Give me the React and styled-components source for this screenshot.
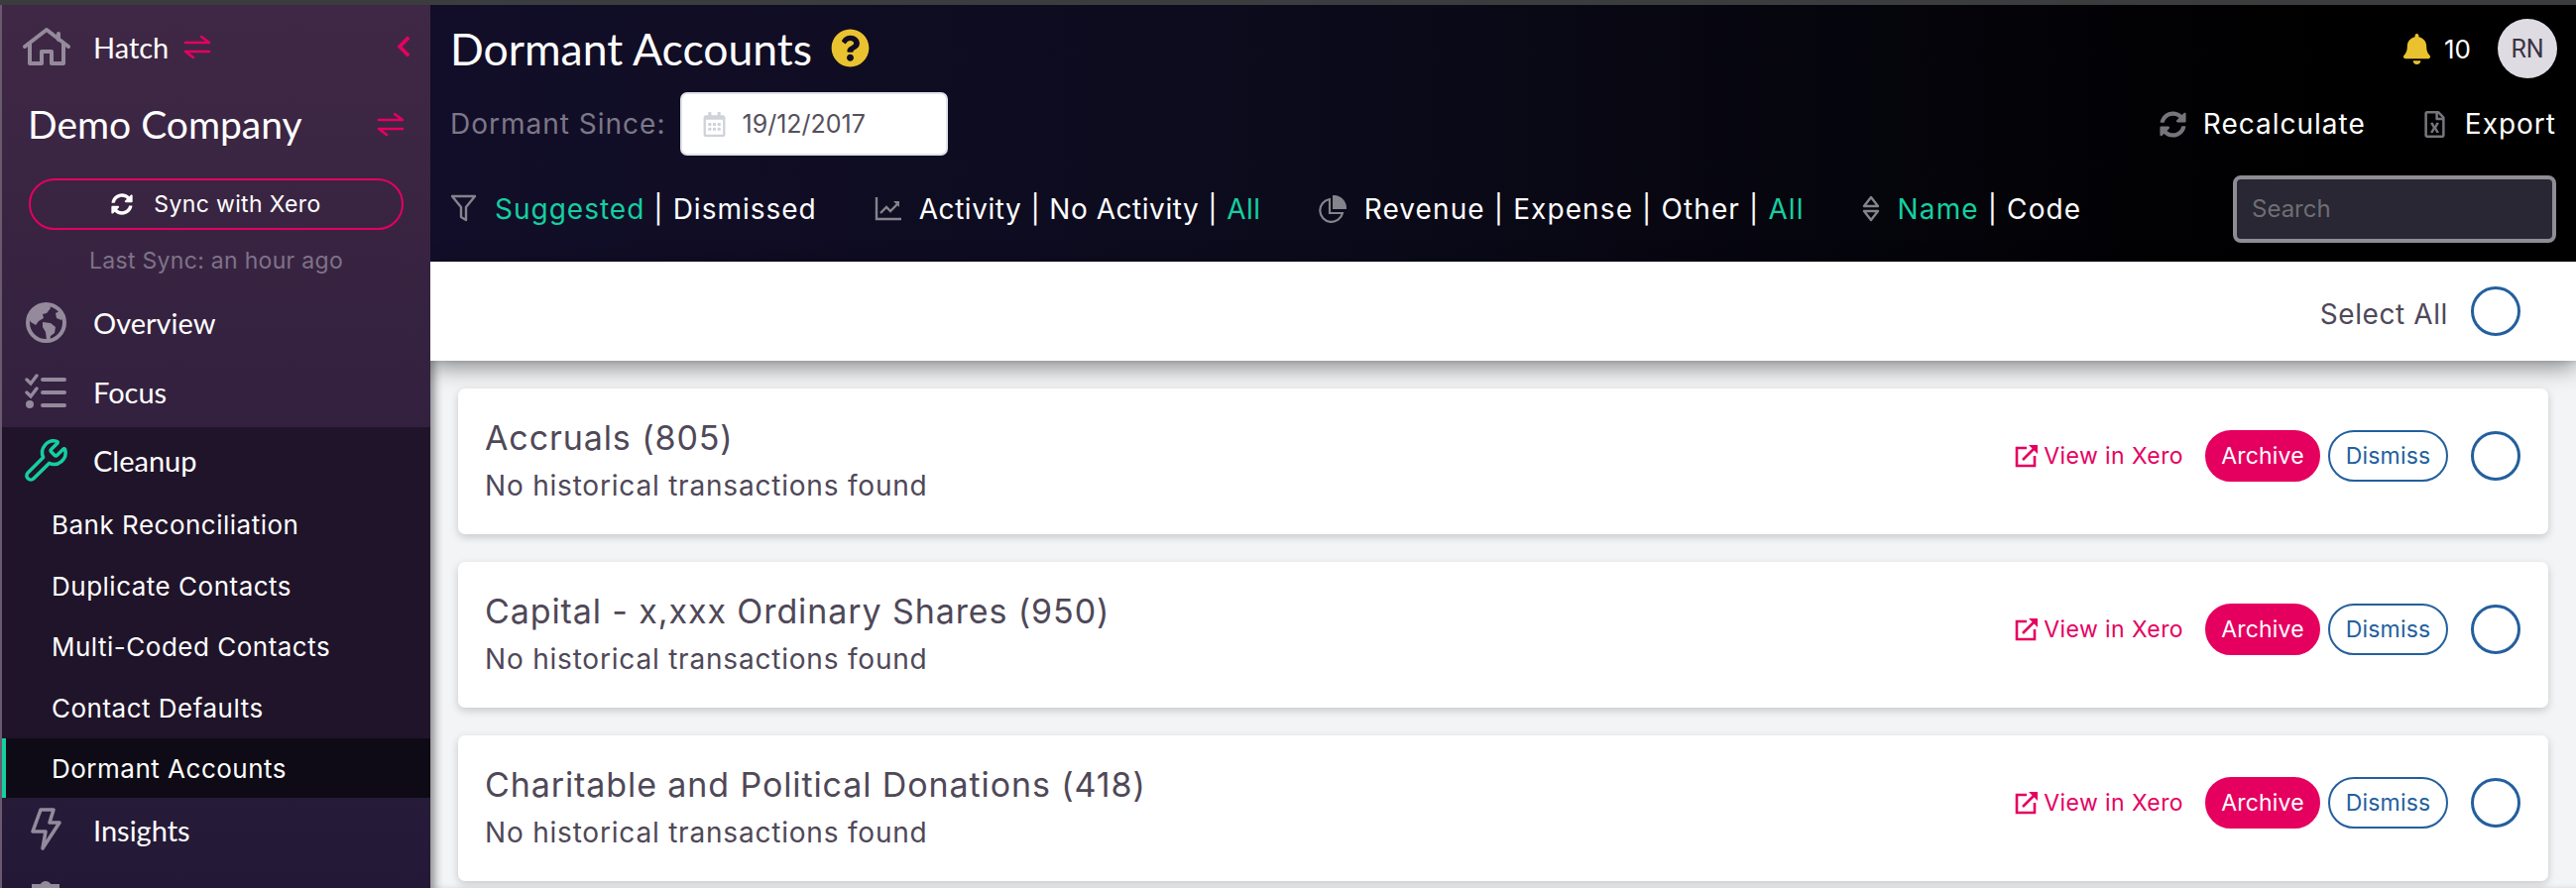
import React from 'react';
import styled, { createGlobalStyle } from 'styled-components';
import { FaSyncAlt, FaChevronLeft, FaQuestionCircle, FaBell, FaRegFileExcel, FaRegCalendarAlt } from 'react-icons/fa';
import { Wrench } from 'lucide-react';

const GlobalStyle = createGlobalStyle`
  html, body {
    margin: 0;
    padding: 0;
    width: 2598px;
    height: 896px;
    overflow: hidden;
    background: #f3f4f6;
    font-family: Inter, "Noto Sans", sans-serif;
  }
  * { box-sizing: border-box; }
`;

const quick = `Lato, "Noto Sans", sans-serif`;

const Page = styled.div`
  width: 2598px;
  height: 896px;
  display: flex;
  flex-direction: column;
  overflow: hidden;
`;
const TopStrip = styled.div`
  height: 5px;
  flex: none;
  background: #3b3c3e;
`;
const Body = styled.div`
  flex: 1;
  display: flex;
  min-height: 0;
`;

const Sidebar = styled.aside`
  width: 434px;
  flex: none;
  border-left: 2px solid #6a5a70;
  background: linear-gradient(180deg, #3f2845 0%, #33213f 45%, #231936 100%);
  color: #fff;
  z-index: 3;
  overflow: hidden;
`;
const BrandRow = styled.div`
  height: 86px;
  display: flex;
  align-items: center;
  padding: 0 15px 2px 21px;
  font-family: ${quick};
  font-size: 29px;
  svg.home { margin-right: 23px; }
  svg.swap { margin-left: 15px; }
  svg.back { margin-left: auto; color: #e5005f; }
`;
const CompanyRow = styled.div`
  height: 70px;
  display: flex;
  align-items: center;
  justify-content: space-between;
  padding: 0 26px 2px;
  font-family: ${quick};
  font-size: 39px;
`;
const SyncButton = styled.button`
  display: flex;
  align-items: center;
  justify-content: center;
  gap: 21px;
  width: 378px;
  height: 52px;
  margin: 19px 0 0 27px;
  background: transparent;
  border: 2px solid #e5005f;
  border-radius: 26px;
  color: #fff;
  font: 400 23px Inter, sans-serif;
  letter-spacing: 0.35px;
`;
const LastSync = styled.div`
  margin: 14px 0 11px;
  height: 34px;
  line-height: 34px;
  text-align: center;
  color: #7f7289;
  font-size: 23px;
  letter-spacing: 0.3px;
`;
const NavItem = styled.div`
  height: ${p => p.$h || 70}px;
  display: flex;
  align-items: center;
  padding-bottom: 2px;
  font-family: ${quick};
  font-size: 29px;
  color: #fff;
  background: ${p => (p.$open ? '#20142a' : 'transparent')};
`;
const NavIcon = styled.span`
  width: 92px;
  flex: none;
  display: flex;
  justify-content: center;
  padding-right: 4px;
  color: ${p => (p.$on ? '#15cfa0' : '#948a9c')};
`;
const SubList = styled.div`
  background: #20142a;
`;
const SubItem = styled.div`
  height: ${p => (p.$active ? '60px' : '61.5px')};
  display: flex;
  align-items: center;
  padding-left: ${p => (p.$active ? '46px' : '50px')};
  font-size: 26px;
  letter-spacing: 0.5px;
  color: #fff;
  background: ${p => (p.$active ? '#0e0b16' : 'transparent')};
  border-left: ${p => (p.$active ? '4px solid #15cfa0' : 'none')};
`;

const Main = styled.main`
  flex: 1;
  min-width: 0;
  display: flex;
  flex-direction: column;
`;
const Header = styled.header`
  height: 259px;
  flex: none;
  padding: 0 20px;
  background: linear-gradient(90deg, #120e29 0%, #0c0b1c 40%, #000 88%);
  color: #fff;
  display: flex;
  flex-direction: column;
`;
const TitleRow = styled.div`
  height: 88px;
  flex: none;
  display: flex;
  align-items: center;
  justify-content: space-between;
`;
const Title = styled.h1`
  margin: 0 0 2px;
  display: flex;
  align-items: center;
  gap: 19px;
  font: 400 44.5px ${quick};
  color: #fff;
`;
const UserBox = styled.div`
  display: flex;
  align-items: center;
  font-size: 26px;
  margin: 0 -1px 0 0;
  span { margin: 0 27px 0 12px; }
`;
const Avatar = styled.div`
  width: 60px;
  height: 60px;
  border-radius: 50%;
  background: #dedce2;
  color: #3a3444;
  display: flex;
  align-items: center;
  justify-content: center;
  font: 400 25px Roboto, sans-serif;
`;
const DateRow = styled.div`
  height: 64px;
  flex: none;
  display: flex;
  align-items: center;
  font-size: 28px;
  letter-spacing: 1px;
  color: #7d7787;
`;
const DateBox = styled.div`
  width: 270px;
  height: 64px;
  margin-left: 15px;
  border-radius: 7px;
  border: 2px solid #dfe3ea;
  background: #fff;
  display: flex;
  align-items: center;
  gap: 15px;
  padding-left: 20px;
  font-size: 25px;
  letter-spacing: 0;
  color: #55505c;
  svg { color: #cfd2d9; }
`;
const Actions = styled.div`
  margin-left: auto;
  display: flex;
  align-items: center;
  color: #fff;
  font-size: 28px;
  letter-spacing: 1px;
`;
const Action = styled.div`
  display: flex;
  align-items: center;
  gap: 17px;
  margin-left: 56px;
  svg { color: #77757b; }
`;
const FilterRow = styled.div`
  flex: 1;
  display: flex;
  align-items: center;
  font-size: 28px;
`;
const FilterGroup = styled.div`
  display: flex;
  align-items: center;
  margin-right: 58px;
  letter-spacing: ${p => p.$track || 1.1}px;
  svg { margin-right: 18px; flex: none; }
`;
const Opt = styled.span`
  color: ${p => (p.$on ? '#15cfa0' : '#fff')};
`;
const Sep = styled.span`
  margin: 0 9px;
  color: #fff;
`;
const Search = styled.div`
  width: 326px;
  height: 68px;
  margin: 0 0 0 auto;
  border: 4px solid #8f8d94;
  border-radius: 8px;
  background: #282733;
  color: #6f6d75;
  font-size: 24px;
  display: flex;
  align-items: center;
  padding-left: 15px;
`;

const SelectBar = styled.div`
  height: 100px;
  flex: none;
  background: #fff;
  display: flex;
  align-items: center;
  justify-content: flex-end;
  padding-right: 56px;
  gap: 23px;
  font-size: 28px;
  letter-spacing: 0.6px;
  color: #4f4858;
  box-shadow: 0 6px 22px rgba(0, 0, 0, 0.45);
  z-index: 2;
`;
const SelectLabel = styled.span`
  margin-top: 6px;
`;
const Radio = styled.div`
  width: 50px;
  height: 50px;
  flex: none;
  border-radius: 50%;
  border: 3px solid #235f9e;
  background: #fff;
`;
const List = styled.div`
  flex: 1;
  padding: 28px 28px 0;
  display: flex;
  flex-direction: column;
  gap: 28px;
  overflow: hidden;
  box-shadow: inset 9px 0 10px -5px rgba(0, 0, 0, 0.45);
`;
const Card = styled.article`
  height: 147px;
  flex: none;
  display: flex;
  align-items: center;
  justify-content: space-between;
  padding: 0 28px 0 27px;
  background: #fff;
  border-radius: 7px;
  box-shadow: 0 3px 8px rgba(0, 0, 0, 0.18);
`;
const CardText = styled.div`
  padding-bottom: 3px;
`;
const CardName = styled.div`
  font-size: 34px;
  letter-spacing: 0.9px;
  color: #4f4858;
  margin-bottom: 11px;
`;
const CardNote = styled.div`
  font-size: 28px;
  letter-spacing: 0.8px;
  color: #4f4858;
`;
const CardActions = styled.div`
  display: flex;
  align-items: center;
  margin-bottom: 11px;
`;
const XeroLink = styled.a`
  display: flex;
  align-items: center;
  gap: 5px;
  margin-right: 22px;
  color: #e5005f;
  font-size: 23px;
  letter-spacing: 0.4px;
`;
const Pill = styled.button`
  height: 52px;
  width: ${p => (p.$solid ? 116 : 121)}px;
  padding: 0;
  margin-right: 8px;
  border-radius: 26px;
  font: 400 23px Inter, sans-serif;
  letter-spacing: 0.2px;
  color: ${p => (p.$solid ? '#fff' : '#235f9e')};
  background: ${p => (p.$solid ? '#e5005f' : '#fff')};
  border: 2px solid ${p => (p.$solid ? '#e5005f' : '#235f9e')};
`;
const RowRadio = styled(Radio)`
  margin-left: 15px;
`;

const Swap = ({ className }) => (
  <svg className={className} width="28" height="24" viewBox="0 0 28 24" fill="none" stroke="#e5005f" strokeWidth="2.6" strokeLinecap="round" strokeLinejoin="round">
    <path d="M2 8h24M18 2l8 6" />
    <path d="M26 17H2M10 23L2 17" />
  </svg>
);

const HomeIcon = () => (
  <svg className="home" width="48" height="38" viewBox="0 0 48 38" fill="none" stroke="#948a9c" strokeWidth="4" strokeLinejoin="round" strokeLinecap="round">
    <path d="M2 19L24 2l22 17" />
    <path d="M7 16v20h12V24h10v12h12V16" />
    <path d="M36 6v6" />
  </svg>
);

const GlobeIcon = () => (
  <svg width="41" height="41" viewBox="0 0 41 41" fill="#948a9c">
    <circle cx="20.5" cy="20.5" r="18.5" fill="none" stroke="#948a9c" strokeWidth="4" />
    <path d="M13 3l11-1 1 4-4 5-4 1 1 4-5 3-3 4-5-3-3-6 4-7z" />
    <path d="M17 20l8 1 5 4-1 6-4 3-1 5-3-1-1-8-3-5z" />
    <path d="M30 11l4-2 4 6-2 3-5-2z" />
  </svg>
);

const TasksIcon = () => (
  <svg width="42" height="36" viewBox="0 0 42 36" fill="none" stroke="#948a9c" strokeLinecap="round">
    <path d="M2 6l4 4 6-8" strokeWidth="3.4" />
    <path d="M2 19l4 4 6-8" strokeWidth="3.4" />
    <circle cx="5" cy="31" r="4" fill="#948a9c" stroke="none" />
    <path d="M18 6h22M18 19h22M18 32h22" strokeWidth="4" />
  </svg>
);

const BoltIcon = () => (
  <svg width="32" height="44" viewBox="0 0 32 44" fill="none" stroke="#948a9c" strokeWidth="3.6" strokeLinejoin="round">
    <path d="M11 2h13l-4 13h10L13 41l3-17H3z" />
  </svg>
);

// only the top of this one is on screen
const CutOffIcon = () => (
  <svg width="40" height="41" viewBox="0 0 40 41" fill="#948a9c">
    <circle cx="20" cy="12" r="6" />
    <path d="M6 9h28v6H6z" />
    <path d="M10 15h20v26H10z" />
  </svg>
);

const FilterIcon = () => (
  <svg width="27" height="29" viewBox="0 0 27 29" fill="none" stroke="#85838b" strokeWidth="2.4" strokeLinejoin="round">
    <path d="M2 2h23l-9 11v13l-5-3V13z" />
  </svg>
);

const ChartIcon = () => (
  <svg width="27" height="24" viewBox="0 0 27 24" fill="none" stroke="#85838b" strokeWidth="2.4">
    <path d="M2 0v22h25" />
    <path d="M6 16l6-6 4 4 8-8" />
    <path d="M19 4h6v6" fill="#85838b" stroke="none" />
  </svg>
);

const PieIcon = () => (
  <svg width="28" height="28" viewBox="0 0 28 28" fill="none">
    <path d="M11 4a11.5 11.5 0 1 0 13 14H11z" stroke="#85838b" strokeWidth="2.2" />
    <path d="M14 0a13 13 0 0 1 14 14H14z" fill="#85838b" />
  </svg>
);

const SortIcon = () => (
  <svg width="18" height="27" viewBox="0 0 18 27" fill="none" stroke="#85838b" strokeWidth="2.4" strokeLinejoin="round">
    <path d="M2 11l7-9 7 9z" />
    <path d="M2 16l7 9 7-9z" />
  </svg>
);

const ExternalIcon = () => (
  <svg width="24" height="24" viewBox="0 0 24 24" fill="none" stroke="#e5005f" strokeWidth="2.6">
    <path d="M12 4H2v18h18V12" />
    <path d="M8 16L21 3" />
    <path d="M14 1h9v9z" fill="#e5005f" stroke="none" />
  </svg>
);

const accounts = [
  'Accruals (805)',
  'Capital - x,xxx Ordinary Shares (950)',
  'Charitable and Political Donations (418)',
];

const subItems = ['Bank Reconciliation', 'Duplicate Contacts', 'Multi-Coded Contacts', 'Contact Defaults'];

export default function App() {
  return (
    <Page>
      <GlobalStyle />
      <TopStrip />
      <Body>
        <Sidebar>
          <BrandRow>
            <HomeIcon />
            Hatch
            <Swap className="swap" />
            <FaChevronLeft className="back" size={24} />
          </BrandRow>
          <CompanyRow>
            Demo Company
            <Swap />
          </CompanyRow>
          <SyncButton>
            <FaSyncAlt size={22} />
            Sync with Xero
          </SyncButton>
          <LastSync>Last Sync: an hour ago</LastSync>
          <NavItem>
            <NavIcon><GlobeIcon /></NavIcon>
            Overview
          </NavItem>
          <NavItem>
            <NavIcon><TasksIcon /></NavIcon>
            Focus
          </NavItem>
          <NavItem $open $h={68}>
            <NavIcon $on><Wrench size={47} strokeWidth={1.8} /></NavIcon>
            Cleanup
          </NavItem>
          <SubList>
            {subItems.map(s => <SubItem key={s}>{s}</SubItem>)}
            <SubItem $active>Dormant Accounts</SubItem>
          </SubList>
          <NavItem $h={66}>
            <NavIcon><BoltIcon /></NavIcon>
            Insights
          </NavItem>
          <NavItem $h={66}>
            <NavIcon><CutOffIcon /></NavIcon>
          </NavItem>
        </Sidebar>
        <Main>
          <Header>
            <TitleRow>
              <Title>
                Dormant Accounts
                <FaQuestionCircle size={39} color="#eac22f" />
              </Title>
              <UserBox>
                <FaBell size={31} color="#eac22f" />
                <span>10</span>
                <Avatar>RN</Avatar>
              </UserBox>
            </TitleRow>
            <DateRow>
              Dormant Since:
              <DateBox>
                <FaRegCalendarAlt size={25} />
                19/12/2017
              </DateBox>
              <Actions>
                <Action><FaSyncAlt size={27} />Recalculate</Action>
                <Action><FaRegFileExcel size={27} />Export</Action>
              </Actions>
            </DateRow>
            <FilterRow>
              <FilterGroup $track={1}>
                <FilterIcon />
                <Opt $on>Suggested</Opt><Sep>|</Sep><Opt>Dismissed</Opt>
              </FilterGroup>
              <FilterGroup $track={0.55}>
                <ChartIcon />
                <Opt>Activity</Opt><Sep>|</Sep><Opt>No Activity</Opt><Sep>|</Sep><Opt $on>All</Opt>
              </FilterGroup>
              <FilterGroup>
                <PieIcon />
                <Opt>Revenue</Opt><Sep>|</Sep><Opt>Expense</Opt><Sep>|</Sep><Opt>Other</Opt><Sep>|</Sep><Opt $on>All</Opt>
              </FilterGroup>
              <FilterGroup>
                <SortIcon />
                <Opt $on>Name</Opt><Sep>|</Sep><Opt>Code</Opt>
              </FilterGroup>
              <Search>Search</Search>
            </FilterRow>
          </Header>
          <SelectBar>
            <SelectLabel>Select All</SelectLabel>
            <Radio />
          </SelectBar>
          <List>
            {accounts.map(a => (
              <Card key={a}>
                <CardText>
                  <CardName>{a}</CardName>
                  <CardNote>No historical transactions found</CardNote>
                </CardText>
                <CardActions>
                  <XeroLink><ExternalIcon />View in Xero</XeroLink>
                  <Pill $solid>Archive</Pill>
                  <Pill>Dismiss</Pill>
                  <RowRadio />
                </CardActions>
              </Card>
            ))}
          </List>
        </Main>
      </Body>
    </Page>
  );
}
